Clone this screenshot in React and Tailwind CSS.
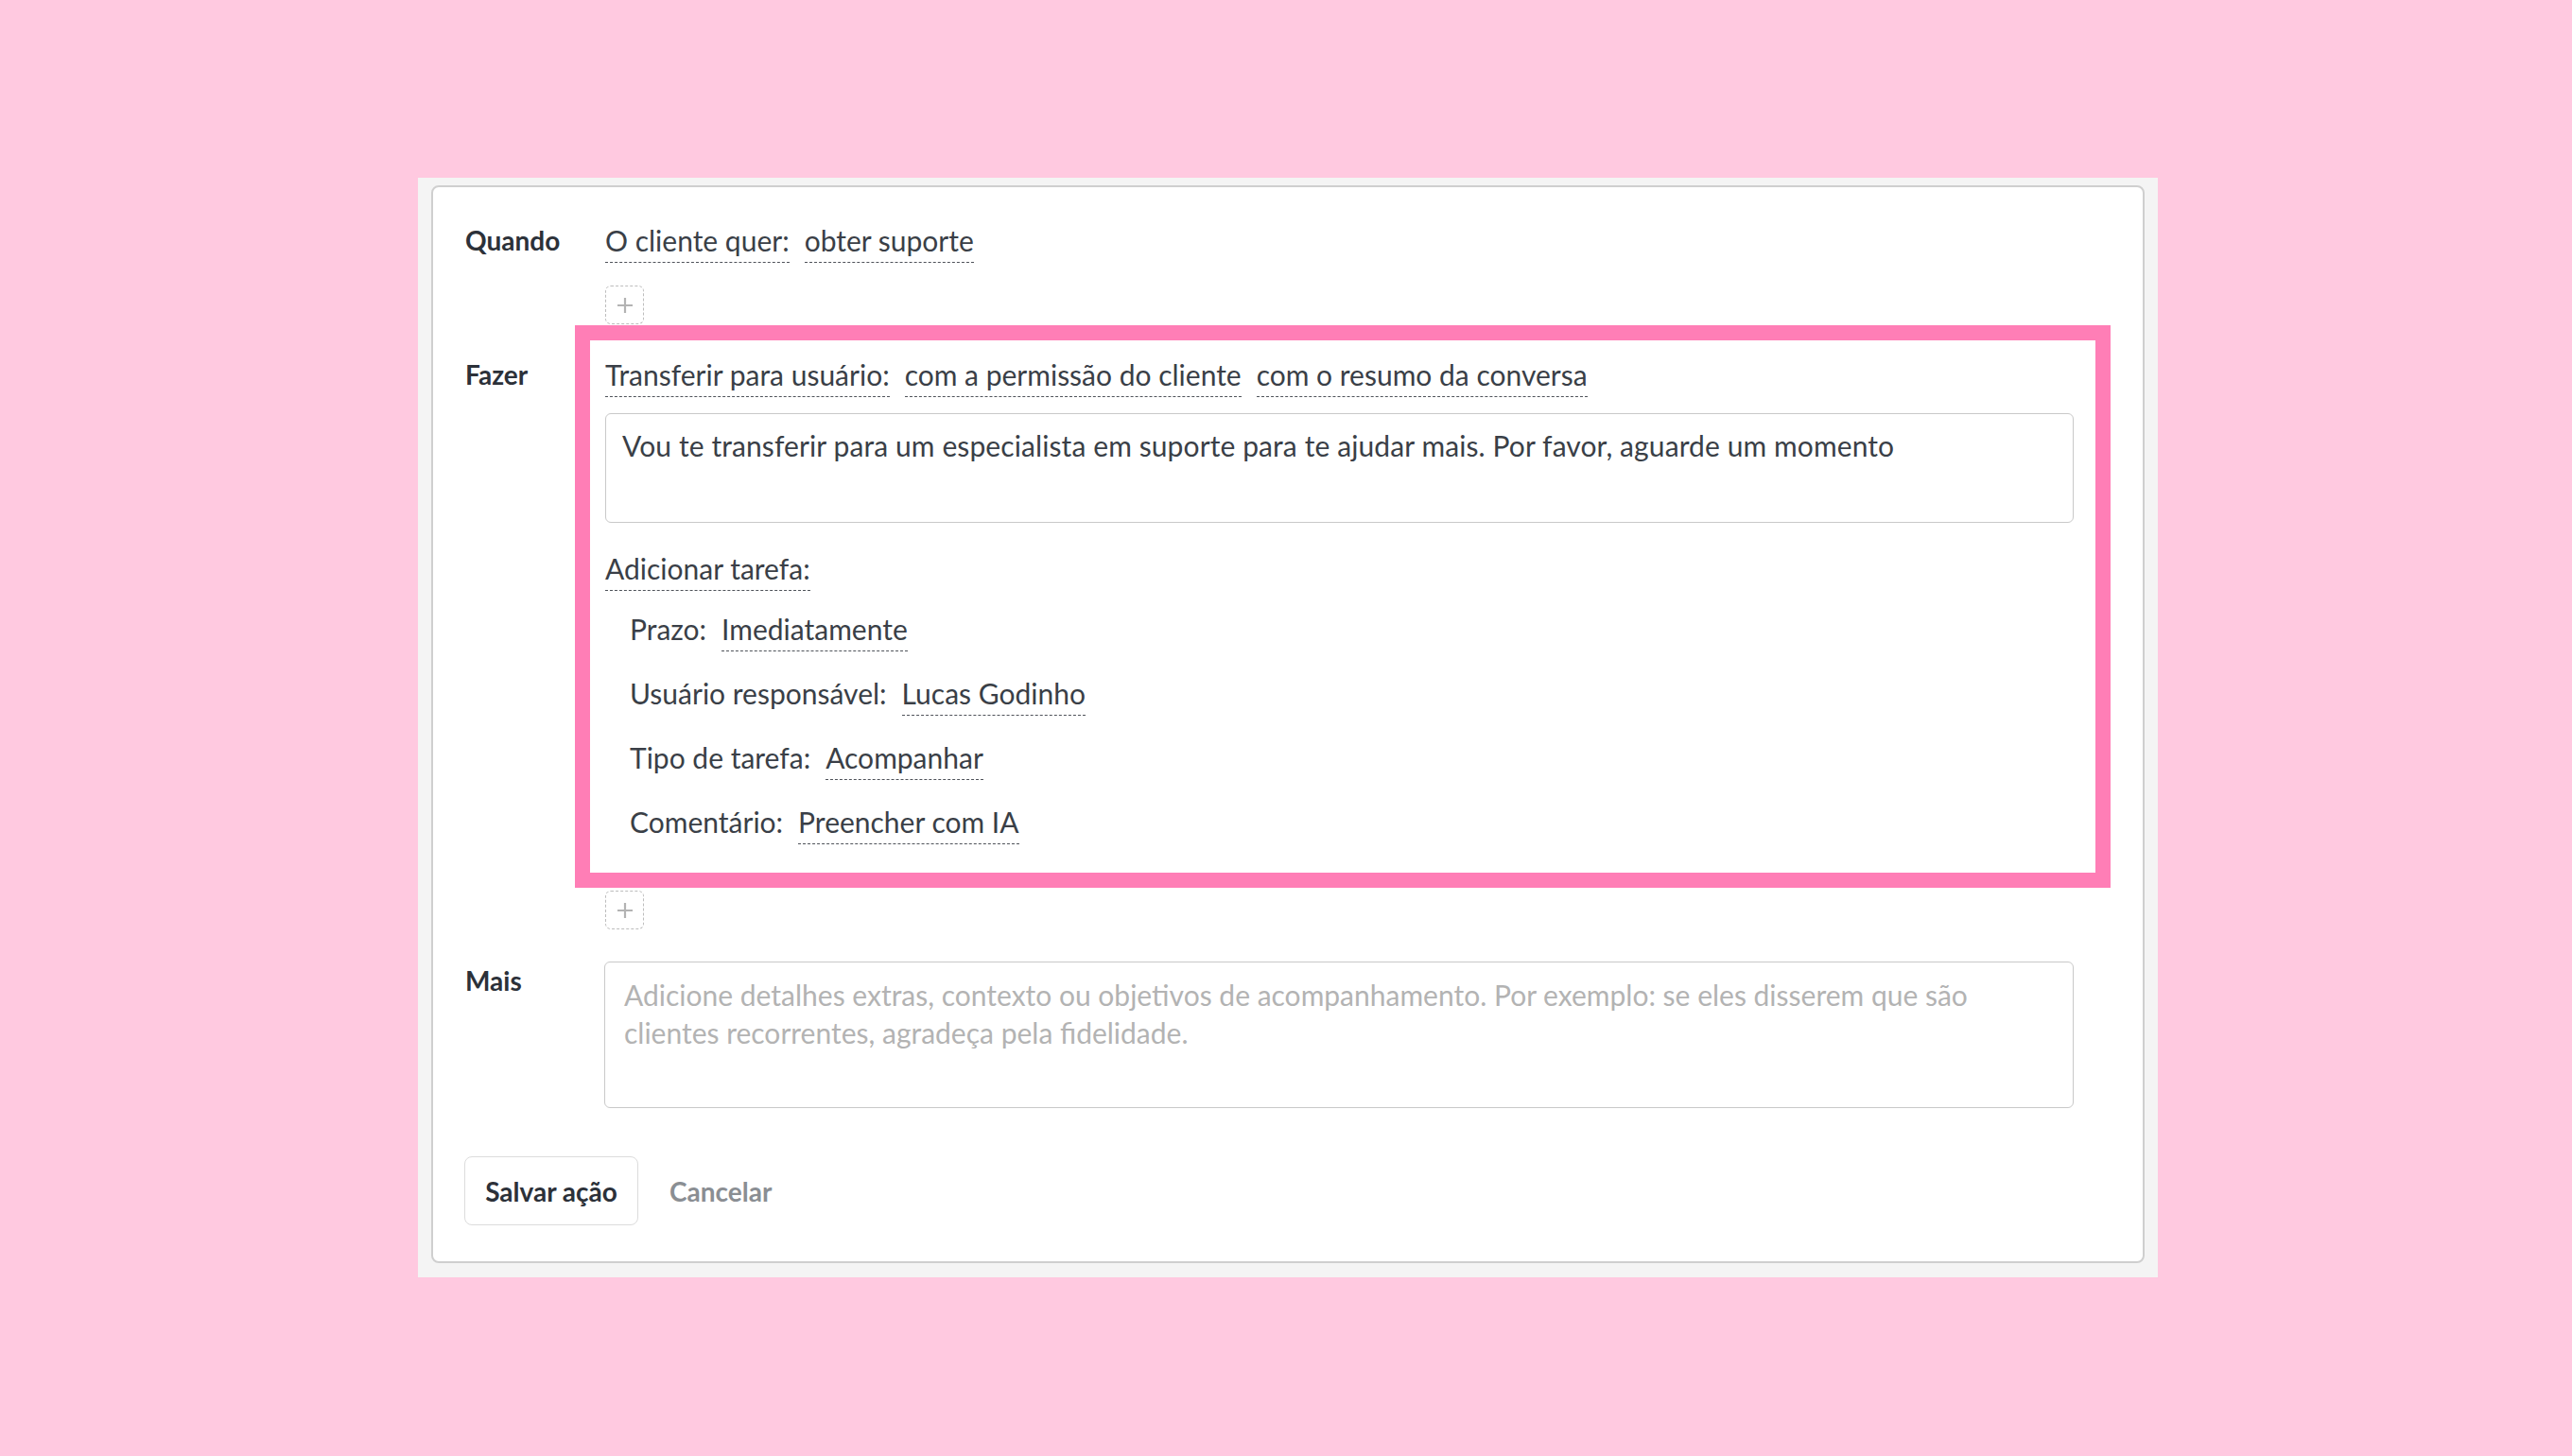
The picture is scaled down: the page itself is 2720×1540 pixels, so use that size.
import React from "react";

function Link({ children }) {
  return (
    <span className="inline-block whitespace-nowrap border-b border-dashed border-[#4f535a] pb-[3px]">
      {children}
    </span>
  );
}

function PlusBox() {
  return (
    <div className="flex h-[41px] w-[41px] items-center justify-center rounded-[6px] border border-dashed border-[#bdbdbd]">
      <svg width="18" height="18" viewBox="0 0 18 18">
        <path d="M9 1v16M1 9h16" stroke="#b3b3b3" strokeWidth="2.2" fill="none" />
      </svg>
    </div>
  );
}

export default function App() {
  return (
    <div className="min-h-[1540px] w-[2720px] bg-[#ffc9e0] pl-[442px] pt-[188px] font-['Lato',sans-serif]">
      <div className="w-[1840px] bg-[#f4f4f4] pb-[15px] pl-[14px] pr-[14px] pt-[8px]">
        <div className="rounded-[8px] border-2 border-[#cfcfcf] bg-white pb-[38px] pl-[34px] pr-[34px] pt-[36px] text-[30px] leading-[40px] text-[#3a3f47]">
          {/* Quando */}
          <div className="flex">
            <div className="w-[148px] shrink-0 text-[28px] font-bold text-[#2c3139]">Quando</div>
            <div className="flex gap-4">
              <Link>O cliente quer:</Link>
              <Link>obter suporte</Link>
            </div>
          </div>
          <div className="ml-[148px] mt-[24px]">
            <PlusBox />
          </div>

          {/* Fazer */}
          <div className="mt-[1px] flex">
            <div className="w-[148px] shrink-0 pt-[32px] text-[28px] font-bold text-[#2c3139]">Fazer</div>
            <div className="-ml-[32px] flex-1 border-[16px] border-[#ff7eb6] pb-[30px] pl-[16px] pr-[23px] pt-[16px]">
              <div className="flex gap-4">
                <Link>Transferir para usuário:</Link>
                <Link>com a permissão do cliente</Link>
                <Link>com o resumo da conversa</Link>
              </div>
              <div className="mt-[17px] h-[116px] w-full rounded-[6px] border border-[#c9c9c9] pl-[17px] pr-[13px] pt-[13px] tracking-[0.1px]">
                Vou te transferir para um especialista em suporte para te ajudar mais. Por favor, aguarde um momento
              </div>
              <div className="mt-[28px]">
                <Link>Adicionar tarefa:</Link>
              </div>
              <div className="ml-[26px] mt-[20px] flex flex-col gap-[24px]">
                <div className="flex gap-4">
                  <span>Prazo:</span>
                  <Link>Imediatamente</Link>
                </div>
                <div className="flex gap-4">
                  <span>Usuário responsável:</span>
                  <Link>Lucas Godinho</Link>
                </div>
                <div className="flex gap-4">
                  <span>Tipo de tarefa:</span>
                  <Link>Acompanhar</Link>
                </div>
                <div className="flex gap-4">
                  <span>Comentário:</span>
                  <Link>Preencher com IA</Link>
                </div>
              </div>
            </div>
          </div>
          <div className="ml-[148px] mt-[3px]">
            <PlusBox />
          </div>

          {/* Mais */}
          <div className="mt-[34px] flex">
            <div className="w-[148px] shrink-0 text-[28px] font-bold text-[#2c3139]">Mais</div>
            <div className="-ml-px h-[155px] w-[1554px] rounded-[6px] border border-[#c9c9c9] pl-[20px] pr-[20px] pt-[14px] text-[#b3b3b3]">
              <div className="whitespace-nowrap">
                Adicione detalhes extras, contexto ou objetivos de acompanhamento. Por exemplo: se eles disserem que são
              </div>
              <div className="whitespace-nowrap">clientes recorrentes, agradeça pela fidelidade.</div>
            </div>
          </div>

          {/* Buttons */}
          <div className="mt-[51px] flex items-center">
            <button className="-ml-px flex h-[73px] w-[184px] items-center justify-center rounded-[8px] border-[1.5px] border-[#dcdcdc] bg-white text-[28px] font-bold text-[#2c3139]">
              Salvar ação
            </button>
            <span className="ml-[33px] text-[28px] font-bold text-[#8a8e93]">Cancelar</span>
          </div>
        </div>
      </div>
    </div>
  );
}
